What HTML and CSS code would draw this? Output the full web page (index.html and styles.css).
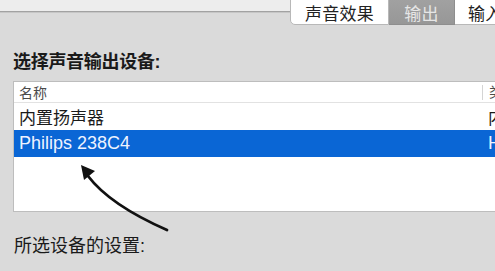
FILE: index.html
```html
<!DOCTYPE html>
<html lang="zh-CN">
<head>
  <meta charset="UTF-8">
  <meta name="viewport" content="width=device-width, initial-scale=1">
  <title>声音</title>
  <link rel="stylesheet" href="styles.css">
</head>
<body>
  <div class="window">
    <div class="toolbar"></div>

    <!-- Tabs sit over the toolbar edge -->
    <nav class="tabs">
      <span class="tab first">声音效果</span>
      <span class="tab active">输出</span>
      <span class="tab">输入</span>
    </nav>

    <main class="pane">
      <h2 class="pane-title">选择声音输出设备:</h2>

      <div class="device-table">
        <div class="row head">
          <span class="col-name">名称</span>
          <span class="col-type">类型</span>
        </div>
        <div class="row">
          <span class="col-name">内置扬声器</span>
          <span class="col-type">内建</span>
        </div>
        <div class="row selected">
          <span class="col-name">Philips 238C4</span>
          <span class="col-type">HDMI</span>
        </div>
        <div class="filler"></div>
      </div>

      <p class="pane-label">所选设备的设置:</p>
    </main>

    <!-- hand-drawn annotation arrow -->
    <svg class="annotation" width="495" height="271" viewBox="0 0 495 271">
      <path d="M167 230 Q110 205 88 176" fill="none" stroke="#111" stroke-width="2.8" stroke-linecap="round"/>
      <polygon points="81,165 95,171 84,180" fill="#111"/>
    </svg>
  </div>
</body>
</html>
```

FILE: styles.css
```css
:root {
  --bg: #dadada;
  --toolbar: #ededed;
  --border: #b8b8b8;
  --text: #1a1a1a;
  --select: #0a66d5;
}

* {
  margin: 0;
  padding: 0;
  box-sizing: border-box;
}

html, body {
  width: 495px;
  height: 271px;
  overflow: hidden;
}

body {
  background-color: var(--bg);
  color: var(--text);
  font-family: 'Liberation Sans', 'Noto Sans CJK SC', sans-serif;
}

.window {
  position: relative;
  height: 271px;
}

.toolbar {
  height: 12px;
  background-color: var(--toolbar);
  border-bottom: 1px solid #a2a2a2;
  box-shadow: 0 1px 0 #c6c6c6;
}

/* Tabs */
.tabs {
  position: absolute;
  top: -6px;
  left: 290px;
  display: flex;
  height: 31px;
}

.tab {
  display: flex;
  align-items: center;
  justify-content: center;
  padding-top: 5px;
  background-color: #fff;
  border: 1px solid var(--border);
  border-left: none;
  font-size: 17px;
  letter-spacing: 0.2px;
  color: #222;
}

.tab.first {
  width: 99px;
  border-left: 1px solid var(--border);
  border-bottom-left-radius: 5px;
}

.tab.active {
  width: 66px;
  background: linear-gradient(#a3a3a3, #979797);
  border-color: #8e8e8e;
  color: #e6e6e6;
}

.tab:last-child {
  width: 80px;
  justify-content: flex-start;
  padding-left: 13px;
}

/* Pane */
.pane {
  padding: 40px 0 0 13px;
}

.pane-title {
  font-size: 18px;
  font-weight: 700;
  line-height: 20px;
  margin-bottom: 9px;
  letter-spacing: -0.3px;
}

.device-table {
  width: 620px;
  height: 131px;
  background-color: #fff;
  border: 1px solid #bdbdbd;
  border-right: none;
  display: flex;
  flex-direction: column;
}

.row {
  display: flex;
  align-items: center;
  height: 27px;
  font-size: 17px;
}

.row.head {
  height: 21px;
  font-size: 14px;
  color: #4a4a4a;
  border-bottom: 1px solid #e2e2e2;
}

.col-name {
  width: 468px;
  padding-left: 5px;
}

.col-type {
  padding-left: 6px;
}

.row.head .col-type {
  border-left: 1px solid #d4d4d4;
  line-height: 15px;
}

.row.selected {
  background-color: var(--select);
  color: #eef3ff;
  font-size: 18px;
}

.filler {
  flex: 1;
}

.pane-label {
  margin-top: 24px;
  margin-left: 1px;
  font-size: 18px;
  line-height: 20px;
}

.annotation {
  position: absolute;
  top: 0;
  left: 0;
  pointer-events: none;
}
```
